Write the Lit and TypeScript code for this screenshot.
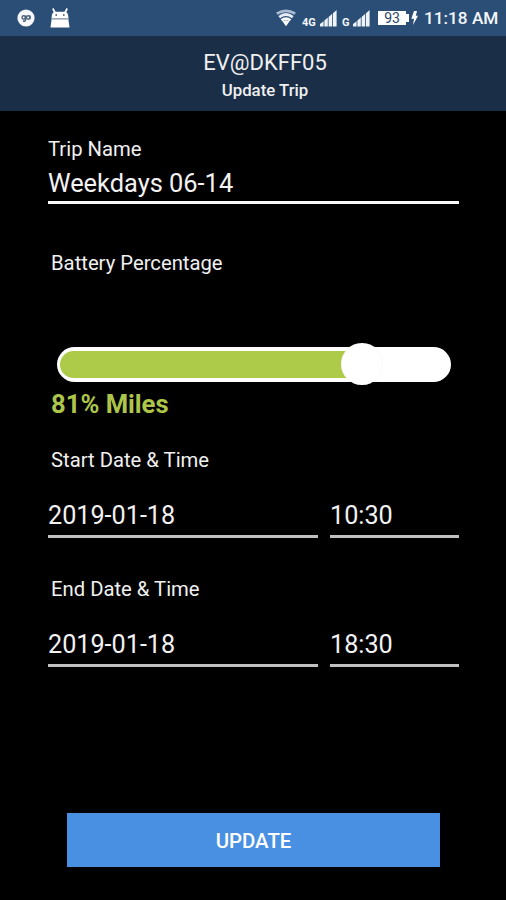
import { LitElement, html, css, svg } from "lit";
import { customElement, property, state } from "lit/decorators.js";
import { classMap } from "lit/directives/class-map.js";
import { styleMap } from "lit/directives/style-map.js";

const bars = () => svg`
  <path d="M0 17.5V15L3.6 12.2V17.5Z M4.4 17.5V11.5L7.8 8.6V17.5Z M8.6 17.5V8L12 5V17.5Z M12.8 17.5V4.4L16.6 1V17.5Z" fill="#eef3fa"/>`;

@customElement("status-bar")
class StatusBar extends LitElement {
  static styles = css`
    :host { display: flex; align-items: center; height: 36px; background: #2b4e77; color: #f4f7fc; box-sizing: border-box; }
    svg { display: block; flex: none; }
    .chat { margin-left: 17px; }
    .android { margin-left: 15px; }
    .spacer { flex: 1; }
    .time { font: 500 17.2px/36px Roboto, sans-serif; width: 74px; margin: 0 8px 0 6px; white-space: nowrap; text-align: right; }
    .battery { font: 14px/14px Roboto, sans-serif; width: 28px; height: 14px; background: #fff; color: #2b4468; text-align: center; margin-left: 8px; }
    .cap { width: 3px; height: 8px; background: #fff; margin-right: 2px; }
    .net { font: 700 11px/10px Roboto, sans-serif; margin-top: 9px; }
    .four { margin-left: 6px; width: 15px; }
    .g { margin-left: 5px; width: 8px; }
    .bars { margin-left: 3px; }
  `;
  render() {
    return html`
      <svg class="chat" width="18" height="18" viewBox="0 0 18 18">
        <circle cx="9" cy="9" r="8.6" fill="#f6f8fb" />
        <g fill="none" stroke="#51677f" stroke-width="1.5">
          <circle cx="6.7" cy="8.5" r="1.7" /><circle cx="11.2" cy="8.5" r="1.7" />
          <path d="M8.5 6.5v4.3q0 1.8-2.6 1.5M13 6.5v3.8" />
        </g>
      </svg>
      <svg class="android" width="20" height="22" viewBox="0 0 20 22">
        <path d="M2.8 1.5L5.2 6M17.2 1.5L14.8 6" stroke="#fff" stroke-width="1.7" />
        <path d="M1.6 11.2Q1.6 5 5 4.8H15Q18.4 5 18.4 11.2Z" fill="#fff" />
        <path d="M1.6 12.2H18.4L19.5 20.5H0.5Z" fill="#fff" />
        <path d="M1 11.7H19" stroke="#a8b0b8" />
        <circle cx="6.2" cy="8" r="0.9" fill="#4c6078" /><circle cx="13.8" cy="8" r="0.9" fill="#4c6078" />
      </svg>
      <span class="spacer"></span>
      <svg width="20" height="18" viewBox="0 0 20 18">
        <g fill="none" stroke-width="2.8">
          <path d="M0.8 4.6Q10-1 19.2 4.6" stroke="#a9bbd2" />
          <path d="M3.2 8.1Q10 3 16.8 8.1" stroke="#e7eef7" />
          <path d="M5.6 11.4Q10 7.8 14.4 11.4" stroke="#fff" />
        </g>
        <path d="M6.6 12.6Q10 10 13.4 12.6L10 17.2Z" fill="#fff" />
      </svg>
      <span class="net four">4G</span>
      <svg class="bars" width="17" height="18" viewBox="0 0 17 18">${bars()}</svg>
      <span class="net g">G</span>
      <svg class="bars" width="17" height="18" viewBox="0 0 17 18">${bars()}</svg>
      <span class="battery">93</span><span class="cap"></span>
      <svg width="7" height="14" viewBox="0 0 7 14"><path d="M3 0H6L4.8 4.7H7L2 14L3 7.8H0.3Z" fill="#fff" /></svg>
      <span class="time">11:18 AM</span>
    `;
  }
}

@customElement("line-field")
class LineField extends LitElement {
  @property() value = "";
  @property({ type: Boolean }) active = false;
  static styles = css`
    :host { display: block; }
    .field { font: 25.2px/34px Roboto, sans-serif; height: 34px; color: #f2f2f2; border-bottom: 3px solid #c0c0c0; padding-bottom: 2px; white-space: nowrap; }
    .field.active { border-color: #fbf9fa; padding: 5px 0 1px; font-size: 25.4px; }
  `;
  render() {
    return html`<div class=${classMap({ field: true, active: this.active })}>${this.value}</div>`;
  }
}

@customElement("charge-slider")
class ChargeSlider extends LitElement {
  @property({ type: Number }) position = 0;
  static styles = css`
    :host { display: block; }
    .track { position: relative; height: 35px; border-radius: 18px; background: #fff; box-sizing: border-box; padding: 4px 3.5px; }
    .fill { height: 27px; border-radius: 14px 0 0 14px; background: #adca48; }
    .thumb { position: absolute; top: -4px; width: 42px; height: 42px; margin-left: -21px; border-radius: 50%; background: #fff; box-shadow: inset 0 0 1px #dfe6e4; }
  `;
  render() {
    const at = this.position + "%";
    return html`<div class="track">
      <div class="fill" style=${styleMap({ width: at })}></div>
      <div class="thumb" style=${styleMap({ left: at })}></div>
    </div>`;
  }
}

@customElement("app-root")
class AppRoot extends LitElement {
  @state() private trip = { name: "Weekdays 06-14", charge: 81, start: ["2019-01-18", "10:30"], end: ["2019-01-18", "18:30"] };
  static styles = css`
    :host { display: flex; flex-direction: column; height: 900px; background: #000; color: #f0f0f0; font-family: Roboto, sans-serif; overflow: hidden; }
    header { height: 75px; background: #1a2e48; text-align: center; padding: 14px 0 0 24px; box-sizing: border-box; white-space: nowrap; }
    .title { font-size: 22px; line-height: 26px; }
    .subtitle { font-size: 16.8px; font-weight: 500; line-height: 28px; }
    main { padding: 26px 47px 0 48px; }
    .label { font-size: 20.25px; line-height: 24px; white-space: nowrap; }
    .inset { margin-left: 3px; }
    .battery { margin-top: 47px; }
    charge-slider { margin: 72px 8px 0 8.5px; }
    .miles { margin: 7px 0 0 3px; font-size: 25.6px; font-weight: 700; line-height: 30px; color: #adc54a; }
    .start { margin-top: 29px; }
    .end { margin-top: 39px; }
    .row { display: grid; grid-template-columns: 270px 1fr; gap: 12px; margin-top: 27px; }
    .update { display: block; width: 373px; height: 54px; margin: 146px 0 0 67px; border: 0; padding: 2px 0 0; box-sizing: border-box; background: #4a90e2; color: #fff; font: 500 20.4px/52px Roboto, sans-serif; }
  `;
  render() {
    const { name, charge, start, end } = this.trip;
    return html`
      <status-bar></status-bar>
      <header><div class="title">EV@DKFF05</div><div class="subtitle">Update Trip</div></header>
      <main>
        <div class="label">Trip Name</div>
        <line-field active .value=${name}></line-field>
        <div class="label inset battery">Battery Percentage</div>
        <charge-slider .position=${77.5}></charge-slider>
        <div class="miles">${charge}% Miles</div>
        <div class="label inset start">Start Date &amp; Time</div>
        <div class="row"><line-field .value=${start[0]}></line-field><line-field .value=${start[1]}></line-field></div>
        <div class="label inset end">End Date &amp; Time</div>
        <div class="row"><line-field .value=${end[0]}></line-field><line-field .value=${end[1]}></line-field></div>
      </main>
      <button class="update">UPDATE</button>
    `;
  }
}
